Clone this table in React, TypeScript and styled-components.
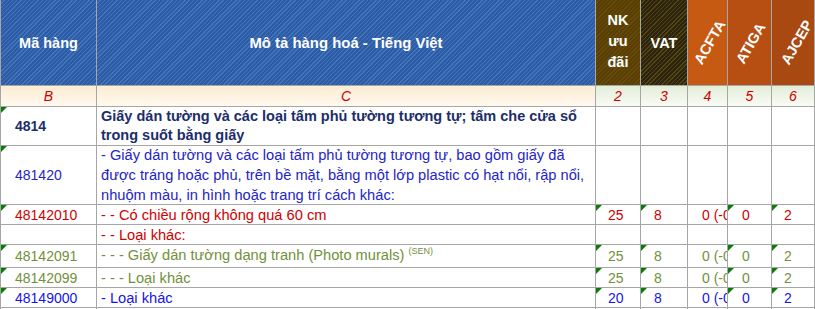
import React from "react";
import styled, { createGlobalStyle, css } from "styled-components";

const GRID = "#a6a6a6";

const GlobalStyle = createGlobalStyle`
    html, body {
        margin: 0;
        padding: 0;
        background: #ffffff;
        overflow: hidden;
    }
    body {
        font-family: "Liberation Sans", Arial, sans-serif;
        font-size: 14px;
    }
`;

const stripes = (base: string, line: string) =>
    `repeating-linear-gradient(135deg, ${base} 0px, ${base} 2px, ${line} 2px, ${line} 3px)`;

const headerBg = {
    blue: stripes("#2c5ca5", "#4474b9"),
    nk: stripes("#5a3f02", "#664a0e"),
    vat: stripes("#2b2410", "#56450f"),
    acfta: "#c75a13",
    atiga: "#b84f12",
    ajcep: "#a94912"
};

const Sup = styled.span`
    font-size: 9px;
    position: relative;
    top: -6px;
`;

interface RowData {
    code?: string;
    desc: React.ReactNode;
    color: string;
    bold?: boolean;
    flag?: boolean;
    values?: string[];
}

const rows: RowData[] = [
    {
        code: "4814",
        desc: "Giấy dán tường và các loại tấm phủ tường tương tự; tấm che cửa sổ trong suốt bằng giấy",
        color: "#1b2d6a",
        bold: true,
        flag: true
    },
    {
        code: "481420",
        desc: "- Giấy dán tường và các loại tấm phủ tường tương tự, bao gồm giấy đã được tráng hoặc phủ, trên bề mặt, bằng một lớp plastic có hạt nổi, rập nổi, nhuộm màu, in hình hoặc trang trí cách khác:",
        color: "#2424c8",
        flag: true
    },
    {
        code: "48142010",
        desc: "- - Có chiều rộng không quá 60 cm",
        color: "#d00000",
        flag: true,
        values: ["25", "8", "0 (-0)", "0", "2"]
    },
    { desc: "- - Loại khác:", color: "#d00000" },
    {
        code: "48142091",
        desc: (
            <>
                - - - Giấy dán tường dạng tranh (Photo murals) <Sup>(SEN)</Sup>
            </>
        ),
        color: "#72903a",
        flag: true,
        values: ["25", "8", "0 (-0)", "0", "2"]
    },
    {
        code: "48142099",
        desc: "- - - Loại khác",
        color: "#72903a",
        flag: true,
        values: ["25", "8", "0 (-0)", "0", "2"]
    },
    {
        code: "48149000",
        desc: "- Loại khác",
        color: "#1414ee",
        flag: true,
        values: ["20", "8", "0 (-0)", "0", "2"]
    }
];

// value column layout: left padding of the text, flagged or not
const valueCols = [
    { pad: 12, flag: true },
    { pad: 13, flag: true },
    { pad: 14, flag: false },
    { pad: 14, flag: true },
    { pad: 12, flag: true }
];

const Sheet = styled.div`
    display: grid;
    width: 815px;
    grid-template-columns: 96px 499px 45px 47px 40px 44px 43px;
    grid-template-rows: 86px 21px 39px 59px 20px 20px 23px 20px 20px 20px;
    border-left: 1px solid ${GRID};
    box-sizing: border-box;
`;

const cellBase = css`
    box-sizing: border-box;
    position: relative;
    display: flex;
    align-items: center;
    border-right: 1px solid ${GRID};
    border-bottom: 1px solid ${GRID};
    overflow: hidden;
`;

const flagMark = css`
    &::before {
        content: "";
        position: absolute;
        top: 0;
        left: 0;
        border-top: 6px solid #0a7a0a;
        border-right: 6px solid transparent;
    }
`;

const HeadCell = styled.div<{ $bg: string; $size?: number }>`
    ${cellBase};
    justify-content: center;
    text-align: center;
    background: ${(p) => p.$bg};
    color: #ffffff;
    font-weight: bold;
    font-size: ${(p) => p.$size ?? 14.5}px;
`;

const Stack = styled.div`
    line-height: 21px;
    margin-top: -2px;
`;

const Slanted = styled.span<{ $dx: number; $dy: number }>`
    display: inline-block;
    white-space: nowrap;
    line-height: 15px;
    font-size: 14.5px;
    transform: translate(${(p) => p.$dx}px, ${(p) => p.$dy}px) rotate(-60deg);
`;

const LetterCell = styled.div<{ $tone: "cream" | "green" }>`
    ${cellBase};
    justify-content: center;
    font-style: italic;
    color: #cc0000;
    font-size: 14px;
    background: ${(p) =>
        p.$tone === "cream"
            ? "linear-gradient(180deg, #fcecd2 0%, #fff9ef 100%)"
            : "linear-gradient(180deg, #e3eed9 0%, #f8fbf4 100%)"};
`;

const CodeCell = styled.div<{ $color: string; $bold?: boolean; $flag?: boolean }>`
    ${cellBase};
    padding-left: 14px;
    color: ${(p) => p.$color};
    font-weight: ${(p) => (p.$bold ? "bold" : "normal")};
    ${(p) => p.$flag && flagMark};
`;

const DescCell = styled.div<{ $color: string; $bold?: boolean }>`
    ${cellBase};
    padding: 0 2px 0 4px;
    color: ${(p) => p.$color};
    font-weight: ${(p) => (p.$bold ? "bold" : "normal")};
    font-size: ${(p) => (p.$bold ? "14.5px" : "14.65px")};
    line-height: ${(p) => (p.$bold ? "19px" : "20px")};
`;

const ValueCell = styled.div<{ $color: string; $pad: number; $flag?: boolean }>`
    ${cellBase};
    padding-left: ${(p) => p.$pad}px;
    white-space: nowrap;
    color: ${(p) => p.$color};
    ${(p) => p.$flag && flagMark};
`;

const BlankCell = styled.div`
    ${cellBase};
`;

export default function App(): React.ReactElement {
    return (
        <>
            <GlobalStyle />
            <Sheet>
                <HeadCell $bg={headerBg.blue}>Mã hàng</HeadCell>
                <HeadCell $bg={headerBg.blue} $size={14.9}>
                    Mô tả hàng hoá - Tiếng Việt
                </HeadCell>
                <HeadCell $bg={headerBg.nk}>
                    <Stack>
                        NK
                        <br />
                        ưu
                        <br />
                        đãi
                    </Stack>
                </HeadCell>
                <HeadCell $bg={headerBg.vat}>VAT</HeadCell>
                <HeadCell $bg={headerBg.acfta}>
                    <Slanted $dx={3} $dy={0}>ACFTA</Slanted>
                </HeadCell>
                <HeadCell $bg={headerBg.atiga}>
                    <Slanted $dx={2} $dy={1}>ATIGA</Slanted>
                </HeadCell>
                <HeadCell $bg={headerBg.ajcep}>
                    <Slanted $dx={4} $dy={0}>AJCEP</Slanted>
                </HeadCell>

                <LetterCell $tone="cream">B</LetterCell>
                <LetterCell $tone="cream">C</LetterCell>
                {["2", "3", "4", "5", "6"].map((n) => (
                    <LetterCell key={n} $tone="green">
                        {n}
                    </LetterCell>
                ))}

                {rows.map((r, i) => (
                    <React.Fragment key={i}>
                        <CodeCell $color={r.color} $bold={r.bold} $flag={r.flag}>
                            {r.code}
                        </CodeCell>
                        <DescCell $color={r.color} $bold={r.bold}>
                            <span>{r.desc}</span>
                        </DescCell>
                        {valueCols.map((c, j) => (
                            <ValueCell
                                key={j}
                                $color={r.color}
                                $pad={c.pad}
                                $flag={!!r.values && c.flag}
                            >
                                {r.values ? r.values[j] : ""}
                            </ValueCell>
                        ))}
                    </React.Fragment>
                ))}
                {Array.from({ length: 7 }).map((_, i) => (
                    <BlankCell key={i} />
                ))}
            </Sheet>
        </>
    );
}
